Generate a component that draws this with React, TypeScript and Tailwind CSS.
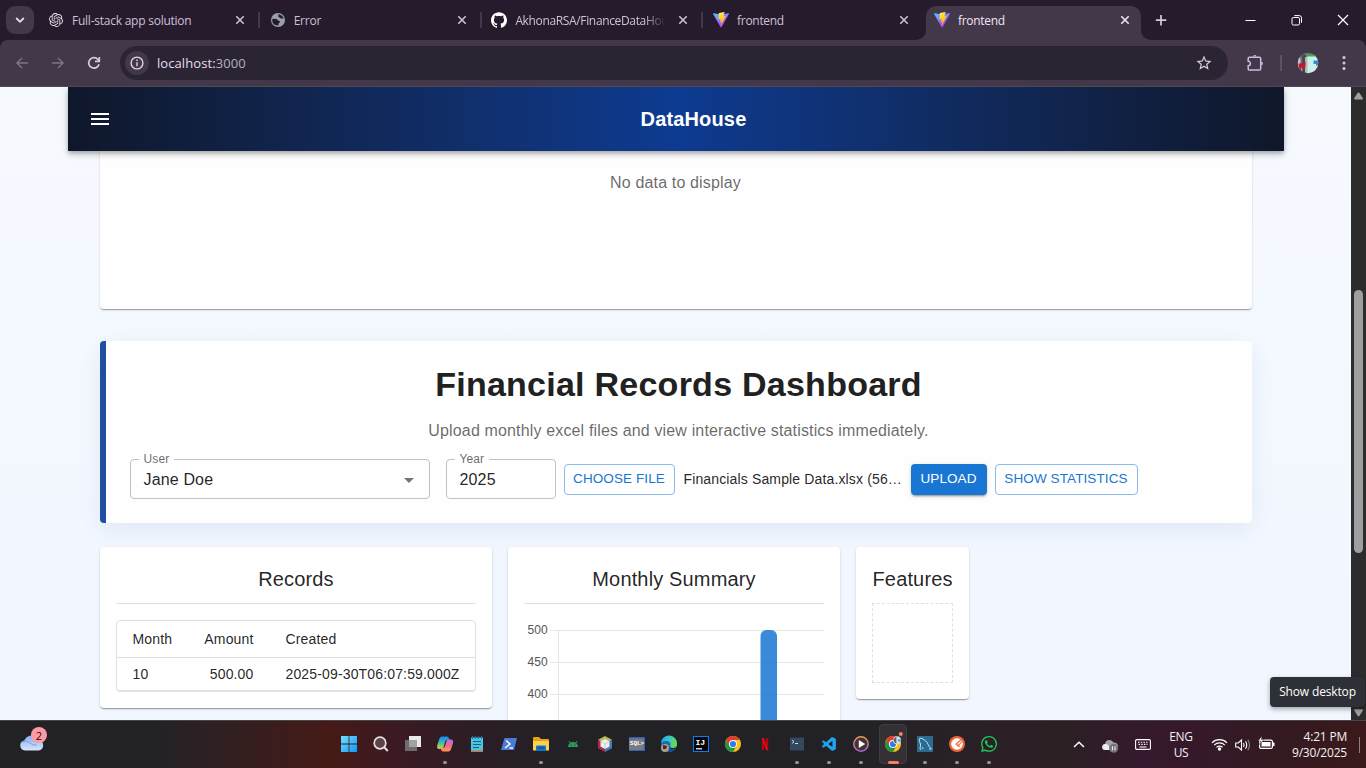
import React from "react";
import { SiOpenai, SiGithub, SiWhatsapp } from "react-icons/si";
import { MdStarOutline } from "react-icons/md";
import { VscVscode } from "react-icons/vsc";

const uiFont = "font-['Open_Sans','Noto_Sans',sans-serif]";
const appFont = "font-['Liberation_Sans',Arial,sans-serif]";
const paperShadow =
  "shadow-[0px_2px_1px_-1px_rgba(0,0,0,0.2),0px_1px_1px_0px_rgba(0,0,0,0.14),0px_1px_3px_0px_rgba(0,0,0,0.12)]";

function ViteLogo() {
  return (
    <svg width="16" height="16" viewBox="0 0 16 16" className="shrink-0">
      <defs>
        <linearGradient id="viteA" x1="0" y1="0" x2="0.6" y2="1">
          <stop offset="0" stopColor="#41d1ff" />
          <stop offset="0.5" stopColor="#8a7bff" />
          <stop offset="1" stopColor="#bd34fe" />
        </linearGradient>
        <linearGradient id="viteB" x1="0.4" y1="0" x2="0.6" y2="1">
          <stop offset="0" stopColor="#ffea83" />
          <stop offset="0.2" stopColor="#ffdd35" />
          <stop offset="1" stopColor="#ffa800" />
        </linearGradient>
      </defs>
      <path d="M15.9 1.9 8.5 15.2a.45.45 0 0 1-.8 0L.1 1.9a.4.4 0 0 1 .4-.6L8 2.6l7.4-1.3c.4 0 .7.3.5.6Z" fill="url(#viteA)" />
      <path d="M11.4 0 6 1.1a.2.2 0 0 0-.2.2l-.4 5.8c0 .1.1.2.3.2l1.5-.4c.2 0 .3.1.3.3l-.5 2.2c0 .2.1.3.3.3l1-.3c.1 0 .3.1.2.3l-.7 3.5c0 .2.2.3.3.1l4.4-9.1c.1-.1 0-.3-.2-.3l-1.6.3c-.2 0-.3-.1-.2-.3l1-3.6c.1-.2 0-.3-.1-.3Z" fill="url(#viteB)" />
    </svg>
  );
}

function Globe() {
  return (
    <svg width="14" height="14" viewBox="0 0 14 14" className="shrink-0">
      <circle cx="7" cy="7" r="7" fill="#9aa0a6" />
      <path d="M1.400 5.800l4 .2q1.400.2 1.500 1.500l1.900.4q.6 1.800-1 2.200l-.4 2.500Q3 12.600 1.600 9.600q-.6-2-.2-3.800z" fill="#251b2d" />
      <path d="M7.200 1.300l.2 1.900q-.2 1.200 1.300 1.200l1 1.200 2.900-.2Q11.400 1.800 7.200 1.300z" fill="#251b2d" />
    </svg>
  );
}

function CloseIcon({ color }: { color: string }) {
  return (
    <svg width="10" height="10" viewBox="0 0 10 10" stroke={color} strokeWidth="1.6" className="shrink-0">
      <path d="M1.3 1.3l7.4 7.4M8.7 1.3L1.3 8.7" />
    </svg>
  );
}

function Tab({ icon, title, fade }: { icon: React.ReactNode; title: string; fade?: boolean }) {
  return (
    <div className="flex h-[40px] w-[221.7px] shrink-0 items-center">
      <div className="flex w-4 shrink-0 justify-center">{icon}</div>
      <div
        className={
          "ml-2 w-[152px] overflow-hidden pt-[2px] text-[12px] whitespace-nowrap text-[#cfc0d6] " +
          (fade ? "tracking-[-0.35px] [mask-image:linear-gradient(90deg,#000_85%,transparent_99%)]" : "tracking-[-0.24px]")
        }
      >
        {title}
      </div>
      <div className="ml-[11px] flex">
        <CloseIcon color="#cfc0d6" />
      </div>
      <div className="ml-[13px] h-4 w-[2px] bg-[#43384a]" />
    </div>
  );
}

function TabStrip() {
  return (
    <div className="flex h-[40px] w-full bg-[#251b2d]">
      <div className="mt-[6px] ml-[6px] flex h-7 w-7 shrink-0 items-center justify-center rounded-[9px] bg-[#43384a]">
        <svg width="10" height="8" viewBox="0 0 10 8" fill="none" stroke="#e9dcee" strokeWidth="1.8">
          <path d="M1.2 2l3.8 3.8L8.8 2" />
        </svg>
      </div>
      <div className="ml-[14px] flex w-[868px] shrink-0">
        <Tab icon={<SiOpenai size={14} color="#e4dfe6" />} title="Full-stack app solution" />
        <Tab icon={<Globe />} title="Error" />
        <Tab icon={<SiGithub size={16} color="#fff" />} title="AkhonaRSA/FinanceDataHouse" fade />
        <div className="flex h-[40px] items-center">
          <ViteLogo />
          <div className="ml-2 w-[152px] pt-[2px] text-[12px] tracking-[-0.3px] text-[#cfc0d6]">frontend</div>
          <div className="ml-[10px] flex">
            <CloseIcon color="#cfc0d6" />
          </div>
        </div>
      </div>
      <svg className="mt-[30px] shrink-0" width="10" height="10" viewBox="0 0 10 10" fill="#43384a">
        <path d="M10 0v10H0A10 10 0 0 0 10 0z" />
      </svg>
      <div className="mt-[6px] flex h-[34px] w-[215px] shrink-0 items-center rounded-t-[10px] bg-[#43384a] pb-[6px] pl-2">
        <ViteLogo />
        <div className="ml-2 w-[152px] pt-[2px] text-[12px] tracking-[-0.3px] text-[#f0e4f4]">frontend</div>
        <div className="ml-[10px] flex">
          <CloseIcon color="#f0e4f4" />
        </div>
      </div>
      <svg className="mt-[30px] shrink-0" width="10" height="10" viewBox="0 0 10 10" fill="#43384a">
        <path d="M0 0v10h10A10 10 0 0 1 0 0z" />
      </svg>
      <svg className="mt-[13px] ml-[3px] shrink-0" width="14" height="14" viewBox="0 0 14 14" stroke="#d8c8df" strokeWidth="1.7">
        <path d="M7 2v10.500M1.800 7.200h10.500" />
      </svg>
      <div className="mr-[17px] ml-auto flex items-center gap-[35px]">
        <svg width="11" height="11" viewBox="0 0 11 11" stroke="#fff"><path d="M.5 5.500h10" /></svg>
        <svg width="11" height="11" viewBox="0 0 11 11" fill="none" stroke="#fff">
          <rect x="1" y="2.500" width="7.500" height="7.500" rx="1.300" />
          <path d="M3.300.6h5a2.200 2.200 0 0 1 2.200 2.200v5" />
        </svg>
        <svg width="12" height="12" viewBox="0 0 12 12" stroke="#fff" strokeWidth="1.200"><path d="M1 1l10 10M11 1L1 11" /></svg>
      </div>
    </div>
  );
}

function Toolbar() {
  return (
    <div className="w-full bg-[#251b2d]">
      <div className="flex h-[47px] w-full items-center rounded-t-[8px] border-b border-[#51494f] bg-[#43384a]">
        <svg className="ml-4 shrink-0" width="12" height="12" viewBox="0 0 12 12" fill="none" stroke="#7f7387" strokeWidth="1.400">
          <path d="M12 6H1M6 1L1 6l5 5" />
        </svg>
        <svg className="ml-6 shrink-0" width="12" height="12" viewBox="0 0 12 12" fill="none" stroke="#7f7387" strokeWidth="1.400">
          <path d="M0 6h11M6 1l5 5-5 5" />
        </svg>
        <svg className="ml-[23px] shrink-0" width="14" height="14" viewBox="0 0 14 14" fill="none" stroke="#d8c8df" strokeWidth="1.700">
          <path d="M12 8.200A5.200 5.200 0 1 1 10.800 3.400L12 4.600" />
          <path d="M12.300 1v4.400H8" />
        </svg>
        <div className="ml-[19px] flex h-[34px] w-[1108px] shrink-0 items-center rounded-full bg-[#2b2433]">
          <div className="ml-[5px] flex h-6 w-6 items-center justify-center rounded-full bg-[#43384a]">
            <svg width="14" height="14" viewBox="0 0 14 14" fill="none" stroke="#e0d4e5" strokeWidth="1.400">
              <circle cx="7" cy="7" r="5.900" />
              <path d="M7 6.200v4M7 3.600v1.500" />
            </svg>
          </div>
          <span className="ml-2 pt-[2px] text-[13px] tracking-[0.08px] text-[#e8deee]">
            localhost:<span className="text-[#b9aec1]">3000</span>
          </span>
          <MdStarOutline className="mr-[15px] ml-auto" size={18} color="#d8ccdd" />
        </div>
        <svg className="ml-[18px] shrink-0" width="18" height="18" viewBox="0 0 18 18" fill="none" stroke="#cdbbe0" strokeWidth="1.500">
          <path d="M2.200 4.500q0-1.200 1.200-1.200h10q1.300 0 1.300 1.300v10.200q0 1.300-1.300 1.300h-10q-1.200 0-1.200-1.200v-3.200a2.200 2.200 0 0 0 0-4.400z" />
          <path d="M7.200 2.600a1.700 1.700 0 0 1 3.400 0zM15.300 7.800a1.700 1.700 0 0 1 0 3.400z" fill="#cdbbe0" stroke="none" />
        </svg>
        <div className="ml-4 h-4 w-[2px] bg-[#5d5265]" />
        <svg className="ml-[15px] shrink-0" width="22" height="22" viewBox="0 0 22 22">
          <defs>
            <clipPath id="avatar"><circle cx="11" cy="11" r="10.200" /></clipPath>
          </defs>
          <g clipPath="url(#avatar)">
            <rect width="22" height="22" fill="#6f7074" />
            <path d="M0 6l3-1 2 17H0z" fill="#c4c8d2" />
            <path d="M5 3h4v18H6z" fill="#4a4648" />
            <path d="M8 5l2.200 0v17h-2.200z" fill="#b5b5ba" />
            <path d="M10.200 3.500H22v19H10.200z" fill="#cdeeea" />
            <path d="M9 2.500l12 0v2H9z" fill="#37b24a" />
            <path d="M1.500 11.500h2v-1h1.500v1.500h2v-2h1.500v4.500h-1.500v3H5.500v-2H4v2.500H2.500z" fill="#c5172c" />
            <path d="M16.500 8.500h5v5h-2.500v-1.500h-2.500z" fill="#2e8ccc" />
          </g>
        </svg>
        <svg className="ml-[22px] shrink-0" width="6" height="16" viewBox="0 0 6 16" fill="#d8c8df">
          <circle cx="3" cy="2.500" r="1.500" />
          <circle cx="3" cy="8" r="1.500" />
          <circle cx="3" cy="13.500" r="1.500" />
        </svg>
      </div>
    </div>
  );
}

function Field({ label, value, select }: { label: string; value: string; select?: boolean }) {
  return (
    <fieldset
      className={
        "-mt-[5px] h-[45px] rounded-[4px] border border-[#c2c2c2] px-[8px] " +
        (select ? "mr-2 w-[300px]" : "w-[110px]")
      }
    >
      <legend className="h-[11px] px-[5px] text-[12px] leading-[11px] tracking-[0.12px] text-black/60">{label}</legend>
      <div className="flex h-[30px] items-center justify-between pr-[7px] pl-[5px]">
        <span className="text-[16px] leading-[24px] tracking-[0.15px] whitespace-nowrap text-black/87">{value}</span>
        {select && (
          <svg width="10" height="5" viewBox="0 0 10 5" fill="#757575">
            <path d="M0 0h10L5 5z" />
          </svg>
        )}
      </div>
    </fieldset>
  );
}

function DashboardHeader() {
  return (
    <section className="mt-8 h-[182px] w-[1152px] rounded-[4px] border-l-[6px] border-[#1f4f9f] bg-[#fefefe] p-6 shadow-[0px_8px_24px_rgba(15,60,120,0.08)]">
      <h1 className="h-[42px] text-center text-[34px] leading-[40px] font-bold tracking-[0.25px] text-[#212121]">
        <span className="relative -top-px">Financial Records Dashboard</span>
      </h1>
      <p className="mt-3 h-6 text-center text-[16px] leading-[23px] tracking-[0.15px] text-black/60">
        Upload monthly excel files and view interactive statistics immediately.
      </p>
      <div className="mt-[16px] flex h-10 items-center gap-2">
        <Field label="User" value="Jane Doe" select />
        <Field label="Year" value="2025" />
        <button className="flex h-[31px] w-[111px] items-center justify-center rounded-[4px] border border-[#8cbae8] text-[13.5px] tracking-[0.1px] whitespace-nowrap text-[#1976d2]">
          CHOOSE FILE
        </button>
        <span className="w-[220px] pl-px text-[14px] tracking-[0.14px] whitespace-nowrap text-black/87">
          Financials Sample Data.xlsx (56…
        </span>
        <button className="flex h-[31px] w-[76px] items-center justify-center rounded-[4px] bg-[#1976d2] text-[13.5px] tracking-[0.1px] text-white shadow-[0px_3px_1px_-2px_rgba(0,0,0,0.2),0px_2px_2px_0px_rgba(0,0,0,0.14),0px_1px_5px_0px_rgba(0,0,0,0.12)]">
          UPLOAD
        </button>
        <button className="flex h-[31px] w-[143px] items-center justify-center rounded-[4px] border border-[#8cbae8] text-[13.5px] tracking-[0.1px] whitespace-nowrap text-[#1976d2]">
          SHOW STATISTICS
        </button>
      </div>
    </section>
  );
}

function CardTitle({ children }: { children: React.ReactNode }) {
  return (
    <h2 className="h-8 pl-px text-center text-[20px] leading-[32px] tracking-[0.15px] whitespace-nowrap text-black/87">{children}</h2>
  );
}

function Records() {
  return (
    <section className={"h-[161px] w-[392px] rounded-[4px] bg-white p-4 " + paperShadow}>
      <CardTitle>Records</CardTitle>
      <div className="mt-2 border-t border-[#e0e0e0]" />
      <div className="mt-4 h-[72px] rounded-[4px] border border-[#e0e0e0] text-[14px] tracking-[0.15px] text-black/87">
        <div className="grid h-[37px] grid-cols-[64px_57px_1fr] items-center border-b border-[#e0e0e0] pl-4">
          <span>Month</span>
          <span className="text-right">Amount</span>
          <span className="pl-8">Created</span>
        </div>
        <div className="grid h-[33px] grid-cols-[64px_57px_1fr] items-center border-b border-[#e0e0e0] pl-4">
          <span>10</span>
          <span className="text-right">500.00</span>
          <span className="pl-8 whitespace-nowrap">2025-09-30T06:07:59.000Z</span>
        </div>
      </div>
    </section>
  );
}

function MonthlySummary() {
  return (
    <section className={"h-[400px] w-[332px] rounded-[4px] bg-white p-4 " + paperShadow}>
      <CardTitle>Monthly Summary</CardTitle>
      <div className="mt-2 border-t border-[#e0e0e0]" />
      <svg width="300" height="300" viewBox="0 0 300 300" className={appFont}>
        <g stroke="#e5e5e5" strokeWidth="1">
          <path d="M26 26.500H300M26 58.500H300M26 90.500H300M26 122.500H300M34.500 26V290" />
        </g>
        <path d="M236.500 290V32a6 6 0 0 1 6-6h4.500a6 6 0 0 1 6 6V290z" fill="#1976d2" fillOpacity="0.85" />
        <g fontSize="12" fill="#555" textAnchor="end" letterSpacing="0.2">
          <text x="24" y="30">500</text>
          <text x="24" y="62">450</text>
          <text x="24" y="94">400</text>
        </g>
      </svg>
    </section>
  );
}

function Features() {
  return (
    <section className={"h-[152px] w-[113px] rounded-[4px] bg-white p-4 " + paperShadow}>
      <CardTitle>Features</CardTitle>
      <div className="mt-2 h-[80px] border border-dashed border-[#e0e0e0]" />
    </section>
  );
}

function Page() {
  return (
    <div className={"flex h-[633px] w-[1351px] flex-col items-center overflow-hidden bg-linear-to-b from-[#f6faff] to-[#f1f6ff] " + appFont}>
      <header className="z-10 flex h-16 w-[1216px] shrink-0 items-center bg-linear-to-r from-[#0f172a] via-[#0d3b91] to-[#0f172a] shadow-[0px_2px_4px_-1px_rgba(0,0,0,0.2),0px_4px_5px_0px_rgba(0,0,0,0.14),0px_1px_10px_0px_rgba(0,0,0,0.12)]">
        <div className="ml-[23px] flex w-[18px] shrink-0 flex-col gap-[3px]">
          <div className="h-[2px] bg-white" />
          <div className="h-[2px] bg-white" />
          <div className="h-[2px] bg-white" />
        </div>
        <div className="ml-[15px] flex-1 text-center text-[20px] font-bold tracking-[0.15px] text-white">
          <span className="-ml-[20px]">DataHouse</span>
        </div>
      </header>
      <section className={"h-[158px] w-[1152px] shrink-0 rounded-b-[4px] bg-[#fefefe] pt-[20px] text-center text-[16px] leading-[23px] tracking-[0.15px] text-black/60 " + paperShadow}>
        No data to display
      </section>
      <DashboardHeader />
      <div className="mt-6 flex w-[1152px] shrink-0 items-start gap-4">
        <Records />
        <MonthlySummary />
        <Features />
      </div>
    </div>
  );
}

function Scrollbar() {
  return (
    <div className="flex h-[633px] w-[15px] flex-col items-center bg-[#2c2c2c]">
      <svg className="mt-[5px]" width="9" height="8" viewBox="0 0 9 8" fill="#9f9f9f"><path d="M3.700.8Q4.500 0 5.300.8L9 6.500Q9 7.500 8 7.500H1Q0 7.500 0 6.500z" /></svg>
      <div className="mt-[190px] h-[263px] w-[9px] rounded-full bg-[#9f9f9f]" />
      <svg className="mt-[156px]" width="9" height="8" viewBox="0 0 9 8" fill="#9f9f9f"><path d="M0 1Q0 .3 1 .3H8Q9 .3 9 1.300L5.300 7Q4.500 7.800 3.700 7z" /></svg>
    </div>
  );
}

function Chrome({ badge }: { badge?: boolean }) {
  return (
    <svg width="16" height="16" viewBox="0 0 16 16" className="overflow-visible">
      <circle cx="8" cy="8" r="8" fill="#fbc116" />
      <path d="M1.070 4A8 8 0 0 1 14.930 4H8L4.500 10z" fill="#e33b2e" />
      <path d="M1.070 4A8 8 0 0 0 8 16l3.400-6L4.600 10z" fill="#229342" />
      <circle cx="8" cy="8" r="4" fill="#fff" />
      <circle cx="8" cy="8" r="3.100" fill="#2f7de9" />
      {badge && (
        <g>
          <circle cx="12" cy="4.200" r="4" fill="#c9e5e2" />
          <path d="M8.400 3l3-2.500v7l-2-1z" fill="#7a5b62" />
          <path d="M13 3.500h2.500v2h-2z" fill="#2e8ccc" />
          <circle cx="15.800" cy="-2" r="2" fill="#f58060" />
        </g>
      )}
    </svg>
  );
}

const svg = (children: React.ReactNode) => (
  <svg width="16" height="16" viewBox="0 0 16 16" className="overflow-visible">{children}</svg>
);

type Item = { name: string; icon: React.ReactNode; running?: boolean; active?: boolean };

const items: Item[] = [
  { name: "start", icon: svg(<><defs><linearGradient id="win" x1="0" y1="0" x2="1" y2="1"><stop stopColor="#72dfff" /><stop offset="1" stopColor="#0f98f5" /></linearGradient></defs><path d="M0 0h7.600v7.600H0zM8.400 0H16v7.600H8.400zM0 8.400h7.600V16H0zM8.400 8.400H16V16H8.400z" fill="url(#win)" /></>) },
  { name: "search", icon: svg(<><circle cx="7" cy="7" r="5.800" fill="#6b5558" fillOpacity=".7" stroke="#e8e2e4" strokeWidth="1.700" /><path d="M11.200 11.200l3.600 3.800" stroke="#e8e2e4" strokeWidth="2" /></>) },
  { name: "taskview", icon: svg(<><path d="M4 0h12v11H4z" fill="#e9e9e9" /><path d="M0 4h12v11H0z" fill="#6e6b6c" /><path d="M4 4h8v7H4z" fill="#a3a1a1" /></>) },
  { name: "copilot", running: true, icon: svg(<><defs><linearGradient id="cpA" x1="0" y1="0" x2="0" y2="1"><stop stopColor="#1c86ee" /><stop offset=".5" stopColor="#2fc5a8" /><stop offset="1" stopColor="#f2c430" /></linearGradient><linearGradient id="cpB" x1="0" y1="0" x2="0" y2="1"><stop stopColor="#b06ef0" /><stop offset=".5" stopColor="#f06a88" /><stop offset="1" stopColor="#fb9a50" /></linearGradient></defs><path d="M4.500.5h5.500q1.500 0 2 2l.5 1.500H10q-1.500 0-2 2L6.500 11.500q-.5 1.500-2 1.500H2q-2.500 0-1.700-4L2.300 3Q3 .5 4.500.5z" fill="url(#cpA)" /><path d="M11.500 15.500H6q-1.500 0-2-2L3.500 12H6q1.500 0 2-2L9.500 5q.5-1.500 2-1.500H14q2.700 0 1.900 4L13.900 13.500q-.7 2-2.400 2z" fill="url(#cpB)" /></>) },
  { name: "notepad", icon: svg(<><path d="M2 1.500h12V15H2z" fill="#4cc3df" /><path d="M2 14.500h12V16H2z" fill="#c17a43" /><path d="M3.500 0v3M6.500 0v3M9.500 0v3M12.500 0v3" stroke="#1c7698" strokeWidth="1" /><path d="M4 5.500h8M4 8.500h8M4 11.500h6" stroke="#155f80" strokeWidth="1.200" /></>) },
  { name: "powershell", icon: svg(<><path d="M3.500 2H16l-3 12H0z" fill="#4a7bd8" /><path d="M5 4.500l4 3.500-5 4M8.500 12H12" fill="none" stroke="#fff" strokeWidth="1.400" /></>) },
  { name: "explorer", running: true, icon: svg(<><path d="M0 2q0-1 1-1h5l2 2h7q1 0 1 1v10H0z" fill="#e7a117" /><path d="M0 5h16v9.500H0z" fill="#fcd34f" /><path d="M3 10.500q0-1 1-1h8q1 0 1 1V15H3z" fill="#1473c8" /><path d="M5 12h6" stroke="#0a4c8e" strokeWidth="1.200" /></>) },
  { name: "android", icon: svg(<><path d="M3 11a5 5 0 0 1 10 0z" fill="#2e9c55" /><path d="M4 5l1.500 2.500M12 5l-1.500 2.500" stroke="#2e9c55" /><circle cx="6" cy="9" r=".6" fill="#222" /><circle cx="10" cy="9" r=".6" fill="#222" /></>) },
  { name: "netbeans", icon: svg(<><path d="M8 0l7 3.800L8 8 1 3.800z" fill="#b5bd4c" /><path d="M1 3.800L8 8v8l-7-3.800z" fill="#b3264e" /><path d="M15 3.800L8 8v8l7-3.800z" fill="#4478b8" /><path d="M8 3l4.500 2.500v5L8 13l-4.500-2.500v-5z" fill="#eef1f0" /><path d="M8 8v5M8 8L3.500 5.500M8 8l4.500-2.500" stroke="#bcc4c4" strokeWidth=".7" /></>) },
  { name: "sql", icon: svg(<><path d="M0 1h16v14H0z" fill="#777c80" /><path d="M0 1h16v1.500H0zM14.800 1H16v14H0v-1h14.800z" fill="#315fbd" /><text x=".8" y="9" fontSize="6" fontWeight="bold" fill="#fff" fontFamily="Liberation Mono">SQL&gt;</text></>) },
  { name: "edge", icon: svg(<><defs><linearGradient id="edge" x1="0" y1="0" x2="1" y2=".3"><stop stopColor="#1d9fe8" /><stop offset=".5" stopColor="#35c4c8" /><stop offset="1" stopColor="#63dc55" /></linearGradient></defs><circle cx="8" cy="8" r="8" fill="#136bbd" /><path d="M0 7a8 8 0 0 1 16 1q0 4-4 4-3 0-3-2 1.500-4-2.500-5Q2 4.500 0 7z" fill="url(#edge)" /><path d="M6 8q0 6 8 5-3 3-7 3z" fill="#0c4fa0" /><path d="M9 10q0 2 3 2l3-.5q-2 2.500-4.500 1.500-2-1-1.500-3z" fill="#222226" /><circle cx="4" cy="12" r="4" fill="#b79b82" /><path d="M2 9l4 1-1 3H2z" fill="#3c2d2a" /></>) },
  { name: "intellij", icon: svg(<><path d="M0 0h16v16H0z" fill="#1479f5" /><path d="M1 1h14v14H1z" fill="#050505" /><path d="M3 12.800h6" stroke="#fff" strokeWidth="1.200" /><text x="2.400" y="9" fontSize="8" fontWeight="bold" fill="#fff" fontFamily="Liberation Mono">IJ</text></>) },
  { name: "chrome", icon: <Chrome /> },
  { name: "netflix", icon: svg(<><path d="M4.800 2H7v12l-2.200.4zM9 2h2.200v12.400L9 14z" fill="#b20710" /><path d="M4.800 2H7l4.200 12.400L9 14z" fill="#e50914" /></>) },
  { name: "terminal", running: true, icon: svg(<><path d="M1 1.500h14v13H1z" fill="#34495e" /><path d="M3 4l2 1.700L3 7.400M6 7.500h3" fill="none" stroke="#dfe6ec" strokeWidth=".9" /></>) },
  { name: "vscode", running: true, icon: <VscVscode size={17} color="#22a3ef" /> },
  { name: "player", running: true, icon: svg(<><defs><linearGradient id="mp" x1="0" y1="0" x2="0" y2="1"><stop stopColor="#f2944b" /><stop offset="1" stopColor="#a767cb" /></linearGradient></defs><circle cx="8" cy="8" r="7.200" fill="#40343a" stroke="url(#mp)" strokeWidth="1.500" /><path d="M5.800 4l6.400 4-6.400 4z" fill="#fff" /></>) },
  { name: "chrome-active", active: true, icon: <Chrome badge /> },
  { name: "mysql", running: true, icon: svg(<><path d="M0 0h16v16H0z" fill="#296c93" /><path d="M4 14Q2.200 12 3.500 10.500 4 8 2.500 5.500 1.800 2.500 3 2.200q2-.2 4 1.500 3.800 2 4.800 6.300l2.700 3h-2.500M5 11l1.500 2" fill="none" stroke="#cfdce4" strokeWidth="1" /></>) },
  { name: "postman", running: true, icon: svg(<><circle cx="8" cy="8" r="8" fill="#ee6535" /><circle cx="8" cy="8" r="5.800" fill="#fff" /><path d="M12.500 3.500L7 8l2 2 4-4.500M9 8.500l1.500 2.500" fill="none" stroke="#ee6535" strokeWidth="1.100" /></>) },
  { name: "whatsapp", running: true, icon: <SiWhatsapp size={16} color="#24c55e" /> },
];

function Taskbar() {
  return (
    <div className={"flex h-12 w-full border-t border-[#4a4449] bg-[linear-gradient(90deg,#222226_0px,#222226_150px,#302022_220px,#451a16_330px,#3b1a23_400px,#2b1d26_480px,#222226_570px,#222226_860px,#2b2026_1010px,#2a2024_1060px,#35192c_1140px,#35192a_1200px,#331a20_1280px,#3b191b_1366px)] text-[#f4f1f3] " + uiFont}>
      <div className="relative mt-[5px] ml-[19px] h-9 w-[34px] shrink-0">
        <svg className="mt-[8px]" width="26" height="17" viewBox="0 0 26 17">
          <defs><linearGradient id="cloud" x1="0" y1="0" x2="0" y2="1"><stop stopColor="#88aef0" /><stop offset="1" stopColor="#d7e4fa" /></linearGradient></defs>
          <path d="M6 16.500a5 5 0 0 1-.7-9.900A8 8 0 0 1 20 6a5.400 5.400 0 0 1 0 10.500z" fill="url(#cloud)" />
          <path d="M3 8.500q4-3 7.500 0 3 3.500 7 2.500" fill="none" stroke="#7b9de3" strokeWidth="1" />
        </svg>
        <div className="absolute top-[1px] left-3 flex h-4 w-4 items-center justify-center rounded-full bg-[#ff99a4] text-[11px] leading-none text-[#1c1013]">2</div>
      </div>
      <div className="ml-[280px] flex w-[672px] shrink-0">
        {items.map((it) => (
          <div key={it.name} className="flex h-[47px] w-8 shrink-0 flex-col items-center">
            <div className={"mt-[3px] flex h-10 w-7 flex-col items-center rounded-[4px] " + (it.active ? "border border-[#403b3f] bg-[#343034]" : "border border-transparent")}>
              <div className="mt-[11px] flex h-4 items-center">{it.icon}</div>
              {it.active && <div className="mt-[9px] h-[3px] w-[11px] shrink-0 rounded-full bg-[#f58060]" />}
              {it.running && <div className="mt-[9px] h-[3px] w-[4px] shrink-0 rounded-full bg-[#97939a]" />}
            </div>
          </div>
        ))}
      </div>
      <div className="ml-[68px] flex h-[47px] items-center">
        <svg width="12" height="7" viewBox="0 0 12 7" fill="none" stroke="#fff" strokeWidth="1.500"><path d="M1 6l5-4.700L11 6" /></svg>
        <svg className="mt-[2px] ml-[17px]" width="17" height="14" viewBox="0 0 17 14">
          <path d="M3 11a3 3 0 0 1 0-6A4.500 4.500 0 0 1 11.500 3.500 4 4 0 0 1 14 11z" fill="#a5a1a5" />
          <path d="M3 11a3 3 0 1 1 1-6q3 0 4 6z" fill="#eee" />
          <circle cx="11.700" cy="9.300" r="4.500" fill="#777278" />
          <path d="M10.400 7.300v4M13 7.300v4" stroke="#fff" />
        </svg>
        <svg className="ml-[16px]" width="16" height="11" viewBox="0 0 16 11" fill="none" stroke="#fff" strokeWidth="1.100">
          <rect x=".6" y=".6" width="14.800" height="9.800" rx="1.200" />
          <path d="M3 3.300h10M3.500 5.400h9" strokeDasharray="1.500 1.200" />
          <path d="M4.500 8h7" />
        </svg>
        <div className="ml-[17px] w-[26px] text-center text-[12px] leading-[16px] tracking-[-0.3px]">
          ENG
          <br />
          US
        </div>
        <svg className="ml-[17px]" width="17" height="13" viewBox="0 0 17 13" fill="none" stroke="#fff" strokeWidth="1.200">
          <path d="M1 4.800a10.600 10.600 0 0 1 15 0M3.200 7.100a7.500 7.500 0 0 1 10.600 0M5.500 9.300a4.200 4.200 0 0 1 6 0" />
          <circle cx="8.500" cy="11" r="1.100" fill="#fff" />
        </svg>
        <svg className="ml-[7px]" width="16" height="14" viewBox="0 0 16 14" fill="none" stroke="#fff" strokeWidth="1.100">
          <path d="M.7 5h2.500L6.500 2v10L3.200 9H.7zM8.500 5q1.300 2 0 4M10.500 3.300q2.500 3.700 0 7.400" />
          <path d="M12.800 1.800q3.500 5.200 0 10.400" stroke="#8a7d84" />
        </svg>
        <svg className="-mt-[3px] ml-[7px]" width="17" height="14" viewBox="0 0 17 14">
          <rect x="1.600" y="4.100" width="12.800" height="8.300" rx="1.500" fill="none" stroke="#fff" strokeWidth="1.200" />
          <path d="M3.500 6h9v4.500h-9zM15 6.500h1.500v3.500H15z" fill="#fff" />
          <path d="M4 0L0 5h2.500L1.500 8.500 6 3.500H3.500z" fill="#fff" stroke="#331a22" strokeWidth=".5" />
        </svg>
        <div className="ml-[12px] w-[60px] text-right text-[12px] leading-[16px] tracking-[-0.2px] whitespace-nowrap">
          4:21 PM
          <br />
          9/30/2025
        </div>
        <div className="ml-[12px] h-4 w-px bg-[#8e8085]" />
      </div>
    </div>
  );
}

export default function App() {
  return (
    <div className={"relative flex h-[768px] w-[1366px] flex-col overflow-hidden " + uiFont}>
      <TabStrip />
      <Toolbar />
      <div className="flex h-[633px]">
        <Page />
        <Scrollbar />
      </div>
      <Taskbar />
      <div className="absolute top-[677px] left-[1270px] flex h-[30px] w-[95px] items-center justify-center rounded-[4px] bg-[#2d3036] text-[12px] tracking-[-0.15px] whitespace-nowrap text-white shadow-[0_2px_5px_rgba(0,0,0,0.35)]">
        Show desktop
      </div>
    </div>
  );
}
